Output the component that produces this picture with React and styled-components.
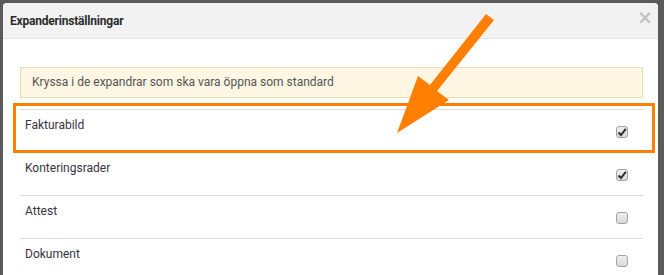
import React from 'react';
import styled, { createGlobalStyle } from 'styled-components';

const GlobalStyle = createGlobalStyle`
  html, body {
    margin: 0;
    padding: 0;
    background: #5b5b5b;
    overflow: hidden;
  }
  body {
    font-family: Roboto, 'Liberation Sans', sans-serif;
  }
`;

const Page = styled.div`
  position: relative;
  width: 664px;
  height: 275px;
  overflow: hidden;
  padding: 3px 6px 0 3px;
  box-sizing: border-box;
`;

const Modal = styled.div`
  background: #fff;
  border-radius: 4px 4px 0 0;
  height: 300px;
`;

const Header = styled.div`
  display: flex;
  align-items: center;
  justify-content: space-between;
  height: 35px;
  padding: 0 5px 0 7px;
  background: #f2f2f2;
  border-bottom: 1px solid #e3e3e3;
  border-radius: 4px 4px 0 0;
`;

const Title = styled.h4`
  margin: 0;
  font-size: 12px;
  font-weight: 700;
  color: #2b2b2b;
  letter-spacing: -0.2px;
`;

const Close = styled.span`
  font-family: 'DejaVu Sans', sans-serif;
  font-size: 19px;
  font-weight: 700;
  color: #c2c2c2;
  line-height: 1;
  margin-top: -7px;
`;

const Body = styled.div`
  padding: 28px 15px 0 17px;
`;

const Alert = styled.div`
  height: 31px;
  box-sizing: border-box;
  padding: 0 11px;
  border: 1px solid #e7deb2;
  background: #fcf6e3;
  color: #555;
  font-size: 12px;
  line-height: 29px;
`;

const List = styled.div`
  margin-top: 11px;
`;

const Row = styled.div`
  display: flex;
  justify-content: space-between;
  height: 43px;
  box-sizing: border-box;
  padding: 8px 15px 0 5px;
  border-top: 1px solid #dcdcdc;
`;

const Label = styled.span`
  font-size: 12px;
  line-height: 14px;
  color: #3a3340;
`;

const Box = styled.span`
  display: flex;
  align-items: center;
  justify-content: center;
  width: 12px;
  height: 12px;
  margin-top: 8px;
  border: 1px solid #a3a3a3;
  border-radius: 3px;
  background: linear-gradient(#eeeeee, #d9d9d9);
  box-sizing: border-box;
`;

const Overlay = styled.svg`
  position: absolute;
  top: 0;
  left: 0;
  pointer-events: none;
`;

const rows = [
  { id: 1, name: 'Fakturabild', checked: true },
  { id: 2, name: 'Konteringsrader', checked: true },
  { id: 3, name: 'Attest', checked: false },
  { id: 4, name: 'Dokument', checked: false },
];

const Checkbox = ({ checked }) => (
  <Box>
    {checked && (
      <svg width="10" height="10" viewBox="0 0 10 10">
        <path d="M1.5 5.5 L4 8 L8.8 1.8" fill="none" stroke="#2e2e2e" strokeWidth="2" />
      </svg>
    )}
  </Box>
);

export default function App() {
  return (
    <Page>
      <GlobalStyle />
      <Modal>
        <Header>
          <Title>Expanderinställningar</Title>
          <Close>×</Close>
        </Header>
        <Body>
          <Alert>Kryssa i de expandrar som ska vara öppna som standard</Alert>
          <List>
            {rows.map(row => (
              <Row key={row.id}>
                <Label>{row.name}</Label>
                <Checkbox checked={row.checked} />
              </Row>
            ))}
          </List>
        </Body>
      </Modal>
      <Overlay width="664" height="275">
        <rect x="14.5" y="104.5" width="639" height="47" fill="none" stroke="#ff8000" strokeWidth="3" />
        <polygon
          points="486,14 494,20 437,91 449,100 397,133 418,76 430,85"
          fill="#ff8000"
        />
      </Overlay>
    </Page>
  );
}
